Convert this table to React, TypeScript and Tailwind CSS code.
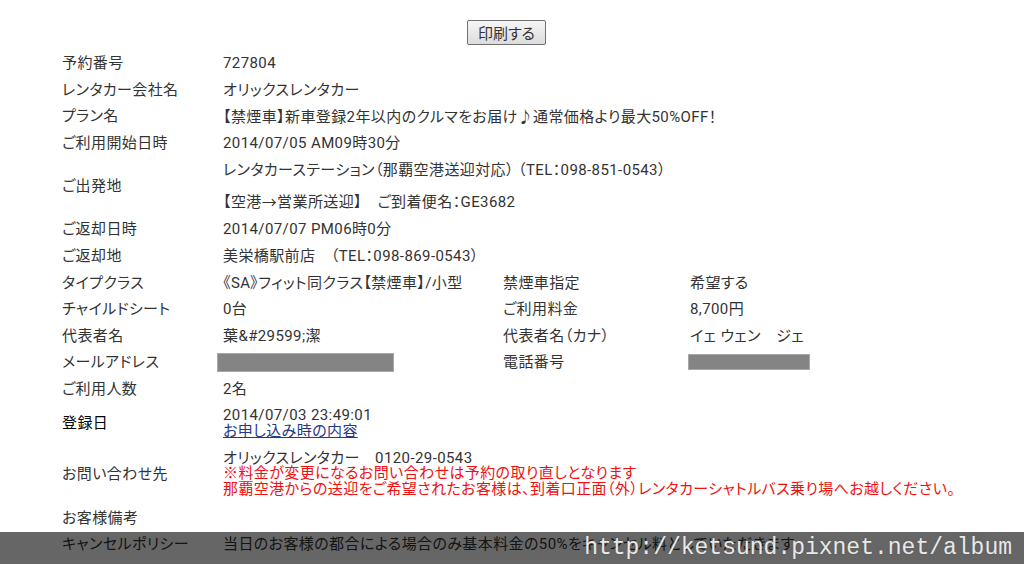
import React from "react";

const F = "font-['Roboto','Noto_Sans_CJK_JP',sans-serif] [font-feature-settings:'palt'] tracking-[0.4px]";
const J = "font-['Noto_Sans_CJK_JP',sans-serif]";

function Row({
  label,
  children,
  h = "h-[26.6px]",
  labelClass = "text-[#333]",
  right,
}: {
  label: string;
  children?: React.ReactNode;
  h?: string;
  labelClass?: string;
  right?: [string, React.ReactNode];
}) {
  return (
    <div className={`grid grid-cols-[161px_280px_187px_1fr] items-center ${h}`}>
      <div className={labelClass}>{label}</div>
      {right ? (
        <>
          <div className="whitespace-nowrap">{children}</div>
          <div>{right[0]}</div>
          <div>{right[1]}</div>
        </>
      ) : (
        <div className="col-span-3 whitespace-nowrap">{children}</div>
      )}
    </div>
  );
}

export default function App() {
  return (
    <div className={`relative h-[564px] w-[1024px] overflow-hidden bg-white text-[15px] leading-[16px] text-[#333] ${F}`}>
      <div className="flex justify-center pt-[20px] pr-[11px]">
        <button className={`h-[25px] w-[79px] rounded-[2px] border border-[#707070] bg-gradient-to-b from-[#f6f6f6] to-[#dcdcdc] text-[15px] leading-[20px] tracking-normal text-[#333] ${J}`}>
          印刷する
        </button>
      </div>
      <div className="pl-[62px] pt-[4.7px]">
        <Row label="予約番号">727804</Row>
        <Row label="レンタカー会社名">オリックスレンタカー</Row>
        <Row label="プラン名">
          【禁煙車】新車登録2年以内のクルマをお届け<span className={J}>♪</span>通常価格より最大50%OFF<span className={J}>！</span>
        </Row>
        <Row label="ご利用開始日時">2014/07/05 AM09時30分</Row>
        <Row label="ご出発地" h="h-[60px]">
          <div className="flex flex-col gap-[4px]">
            <div className="flex h-[28px] items-center">レンタカーステーション（那覇空港送迎対応） （TEL：098-851-0543）</div>
            <div className="flex h-[28px] items-center">
              【空港<span className={J}>→</span>営業所送迎】　ご到着便名：GE3682
            </div>
          </div>
        </Row>
        <Row label="ご返却日時">2014/07/07 PM06時0分</Row>
        <Row label="ご返却地">美栄橋駅前店　（TEL：098-869-0543）</Row>
        <Row label="タイプクラス" right={["禁煙車指定", "希望する"]}>
          《SA》フィット同クラス【禁煙車】/小型
        </Row>
        <Row label="チャイルドシート" right={["ご利用料金", "8,700円"]}>
          0台
        </Row>
        <Row label="代表者名" right={["代表者名（カナ）", "イェ ウェン　ジェ"]}>
          葉&amp;#29599;潔
        </Row>
        <Row
          label="メールアドレス"
          right={[
            "電話番号",
            <div className="-ml-[2px] h-[16px] w-[122px] border border-[#a8a8a8] bg-[#848484]" />,
          ]}
        >
          <div className="-ml-[6px] h-[19px] w-[177px] border border-[#a8a8a8] bg-[#848484]" />
        </Row>
        <Row label="ご利用人数">2名</Row>
        <Row label="登録日" h="h-[41.4px]" labelClass="text-black">
          <div className="pt-[1px]">
            <div>2014/07/03 23:49:01</div>
            <a href="#" className="text-[#27388a] underline">お申し込み時の内容</a>
          </div>
        </Row>
        <Row label="お問い合わせ先" h="h-[60.6px]">
          <div className="leading-[15.5px]">
            <div>オリックスレンタカー　0120-29-0543</div>
            <div className="text-[#f01010]">※料金が変更になるお問い合わせは予約の取り直しとなります</div>
            <div className="text-[#f01010]">那覇空港からの送迎をご希望されたお客様は、到着口正面（外）レンタカーシャトルバス乗り場へお越しください。</div>
          </div>
        </Row>
        <Row label="お客様備考"></Row>
        <Row label="キャンセルポリシー">当日のお客様の都合による場合のみ基本料金の50%をキャンセル料としていただきます</Row>
      </div>
      <div className="absolute bottom-0 left-0 flex h-[32px] w-full items-center justify-end bg-black/60 pr-[12px]">
        <span className="font-['Liberation_Mono',monospace] text-[23px] leading-[32px] tracking-normal text-[#e8e8e8] [font-feature-settings:normal] [text-shadow:0_0_2px_#555]">
          http://ketsund.pixnet.net/album
        </span>
      </div>
    </div>
  );
}
